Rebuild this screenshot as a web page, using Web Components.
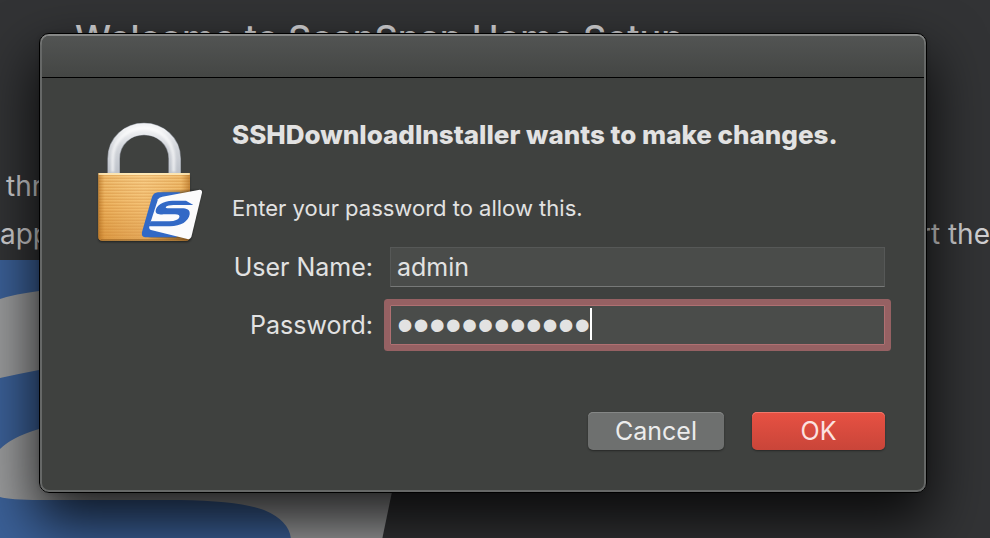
<!DOCTYPE html>
<html lang="en">
<head>
<meta charset="utf-8">
<title>Authentication</title>
<style>
html, body { margin: 0; height: 100%; overflow: hidden; background: #323335; }
body { font-family: Inter, "Liberation Sans", sans-serif; color: #e2e2e2; }
</style>
</head>
<body>
<desktop-stage>
  <setup-backdrop slot="backdrop"></setup-backdrop>
  <auth-dialog>
    <lock-icon slot="icon"></lock-icon>
    <span slot="heading">SSHDownloadInstaller wants to make changes.</span>
    <span slot="message">Enter your password to allow this.</span>
    <form-field label="User Name:" type="text" value="admin"></form-field>
    <form-field label="Password:" type="password" value="abcdefghijkl" active></form-field>
    <push-button slot="actions">Cancel</push-button>
    <push-button slot="actions" primary>OK</push-button>
  </auth-dialog>
</desktop-stage>

<script>
class BaseElement extends HTMLElement {
  constructor() {
    super();
    const t = document.createElement('template');
    t.innerHTML = this.constructor.markup;
    this.attachShadow({ mode: 'open' }).append(t.content.cloneNode(true));
  }
}

customElements.define('desktop-stage', class extends BaseElement {
  static markup = `
  <style>
    :host { display: grid; height: 100vh; overflow: hidden; }
    .layer { grid-area: 1 / 1; min-width: 0; min-height: 0; }
    .front { padding: 33px 63px 0 39px; z-index: 1; }
  </style>
  <div class="layer"><slot name="backdrop"></slot></div>
  <div class="layer front"><slot></slot></div>`;
});

customElements.define('setup-backdrop', class extends BaseElement {
  static markup = `
  <style>
    :host { display: block; overflow: hidden; height: 100%; color: #d2d2d4; }
    h2 { margin: 0; padding: 14px 0 0 75px; font-size: 36px; font-weight: 500; line-height: 48px; white-space: nowrap; }
    .copy { padding-top: 100px; font-size: 28px; line-height: 48px; }
    .row { display: flex; justify-content: space-between; white-space: nowrap; }
    .indent { padding-left: 6px; }
    svg { display: block; margin-top: 2px; width: 400px; height: 280px; }
  </style>
  <h2>Welcome to ScanSnap Home Setup</h2>
  <div class="copy">
    <div class="row indent"><span>thr</span></div>
    <div class="row"><span>app</span><span>rt the</span></div>
  </div>
  <svg viewBox="0 260 400 280" aria-hidden="true">
    <path d="M0 260H440L382 540H0z" fill="#9a9b9c"/>
    <path d="M0 260H300V262C200 262 100 276 39 291Q15 294 0 299z" fill="#3b6097"/>
    <path d="M0 378Q18 374 39 370L90 366V415Q60 420 39 429Q12 437 0 449z" fill="#3b6097"/>
    <path d="M0 497Q10 500 40 500H180Q240 501 264 510Q290 521 291 540H0z" fill="#3b6097"/>
  </svg>`;
});

customElements.define('auth-dialog', class extends BaseElement {
  static markup = `
  <style>
    :host { display: block; }
    section { border: 1px solid #000; border-radius: 10px; background: linear-gradient(#8a8b8a, #666867 12px); padding: 2px;
      box-shadow: 0 26px 56px 4px rgba(0,0,0,.78), 0 0 4px rgba(0,0,0,.15); }
    .panel { border-radius: 7px; overflow: hidden; background: #3f413f; }
    header { height: 41px; border-bottom: 1px solid #000; background: linear-gradient(#525453, #444644); }
    form { display: grid; grid-template-columns: 110px minmax(0, 1fr); column-gap: 27px; padding: 41px 39px 40px 53px; }
    h1 { margin: 0; font-size: 26px; font-weight: 800; line-height: 32px; white-space: nowrap; }
    p { margin: 43px 0 25px; font-size: 22px; line-height: 28px; white-space: nowrap; }
    .fields { display: grid; gap: 18px; }
    .actions { display: flex; justify-content: flex-end; gap: 28px; margin-top: 67px; grid-column: 1 / -1; }
  </style>
  <section role="dialog" aria-labelledby="t">
    <div class="panel">
      <header></header>
      <form onsubmit="return false">
        <slot name="icon"></slot>
        <div>
          <h1 id="t"><slot name="heading"></slot></h1>
          <p><slot name="message"></slot></p>
          <div class="fields"><slot></slot></div>
        </div>
        <div class="actions"><slot name="actions"></slot></div>
      </form>
    </div>
  </section>`;
});

customElements.define('form-field', class extends BaseElement {
  static markup = `
  <style>
    :host { display: grid; grid-template-columns: 141px minmax(0, 1fr); column-gap: 17px; align-items: center; }
    label { justify-self: end; font-size: 25px; line-height: 32px; white-space: nowrap; }
    .box { position: relative; display: flex; }
    input { box-sizing: border-box; width: 100%; height: 40px; margin: 0; padding: 0 6px; border: 1px solid #565857; border-bottom-color: #777978;
      border-radius: 0; outline: 0; background: #4a4c4a; color: #e2e2e2; font: 25px Inter, "Liberation Sans", sans-serif; caret-color: transparent; }
    input[type=password] { font: 46px "Liberation Sans", sans-serif; }
    :host([active]) input { border-color: #b07072; box-shadow: 0 0 0 6px #966163; border-radius: 1px; }
    .caret { display: none; position: absolute; left: 200px; top: 3px; width: 2px; height: 32px; background: #fff; }
    :host([active]) .caret { display: block; }
  </style>
  <label for="f"></label>
  <div class="box"><input id="f"><i class="caret"></i></div>`;
  connectedCallback() {
    const input = this.shadowRoot.querySelector('input');
    this.shadowRoot.querySelector('label').textContent = this.getAttribute('label');
    input.type = this.getAttribute('type');
    input.value = this.getAttribute('value');
  }
});

customElements.define('push-button', class extends BaseElement {
  static markup = `
  <style>
    :host { display: block; }
    button { width: 136px; height: 38px; padding: 0; border: 0; border-radius: 5px; color: #ececec; background: #6e706f;
      font: 25px/36px Inter, "Liberation Sans", sans-serif; box-shadow: inset 0 1px #858786, 0 1px 2px rgba(0,0,0,.4); }
    :host([primary]) button { width: 133px; color: #fbe3e0; background: linear-gradient(#e75143, #c94539); box-shadow: inset 0 1px #f0786b, 0 1px 2px rgba(0,0,0,.4); }
  </style>
  <button type="button"><slot></slot></button>`;
});

customElements.define('lock-icon', class extends BaseElement {
  static markup = `
  <style>
    :host { display: block; }
    svg { display: block; width: 110px; height: 124px; overflow: visible; }
  </style>
  <svg viewBox="45 27 330 372" role="img" aria-label="Lock">
    <defs>
      <linearGradient id="body" x1="0" y1="0" x2="0" y2="1"><stop offset="0" stop-color="#f8cb80"/><stop offset=".5" stop-color="#f3ba66"/><stop offset="1" stop-color="#e19f49"/></linearGradient>
      <linearGradient id="side" x1="0" x2="1"><stop offset="0" stop-color="#a35f14" stop-opacity=".6"/><stop offset=".07" stop-color="#b66f1c" stop-opacity=".12"/><stop offset=".5" stop-color="#fff" stop-opacity=".08"/><stop offset=".9" stop-color="#b66f1c" stop-opacity=".1"/><stop offset="1" stop-color="#a35f14" stop-opacity=".6"/></linearGradient>
      <linearGradient id="steel" x1="0" y1="0" x2="0" y2="1"><stop offset="0" stop-color="#f2f3f5"/><stop offset=".4" stop-color="#d3d6db"/><stop offset="1" stop-color="#bcc1c9"/></linearGradient>
      <pattern id="lines" width="10" height="9" patternUnits="userSpaceOnUse"><rect width="10" height="3" y="5" fill="#d28b35" opacity=".6"/></pattern>
      <filter id="soft" x="-20%" y="-20%" width="140%" height="140%"><feGaussianBlur stdDeviation="3"/></filter>
    </defs>
    <path d="M101 192V146C101 92 144 57 192 57S284 92 284 146V192" fill="none" stroke="#8f949c" stroke-width="38"/>
    <path d="M101 192V146C101 92 144 57 192 57S284 92 284 146V192" fill="none" stroke="url(#steel)" stroke-width="34"/>
    <path d="M98 186V146C98 89 144 54 192 54S279 89 281 146V186" fill="none" stroke="#fff" stroke-width="10" opacity=".65" filter="url(#soft)"/>
    <rect x="56" y="196" width="273" height="200" rx="9" fill="#000" opacity=".5" filter="url(#soft)"/>
    <path d="M55 189H330V380Q330 392 318 392H67Q55 392 55 380z" fill="url(#body)"/>
    <path d="M55 195H330V385H55z" fill="url(#lines)"/>
    <path d="M55 189H330V380Q330 392 318 392H67Q55 392 55 380z" fill="url(#side)"/>
    <path d="M56 192H329" stroke="#fff0c4" stroke-width="4"/>
    <path d="M62 389H322" stroke="#9c6320" stroke-width="4" opacity=".6"/>
    <path d="M245 247L366 240L332 390L207 381z" fill="#000" opacity=".45" filter="url(#soft)"/>
    <path d="M234 247H300L290 382H195Q183 380 186 366L216 261Q221 248 234 247z" fill="#3269c6"/>
    <path d="M247 260L359 239Q367 239 366 248L334 381Q331 389 322 387L213 360Q206 357 208 348L234 268Q237 262 247 260z" fill="#fbfbfc"/>
    <path d="M340 285L318 272H278C248 272 228 288 227 302C226 313 238 314 255 313H285Q301 313 298 322Q294 333 268 334H212L206 349H270C303 349 326 334 329 313C331 299 320 295 305 295H268Q254 295 258 290Q264 285 280 285z" fill="#3269c6"/>
  </svg>`;
});
</script>
</body>
</html>
